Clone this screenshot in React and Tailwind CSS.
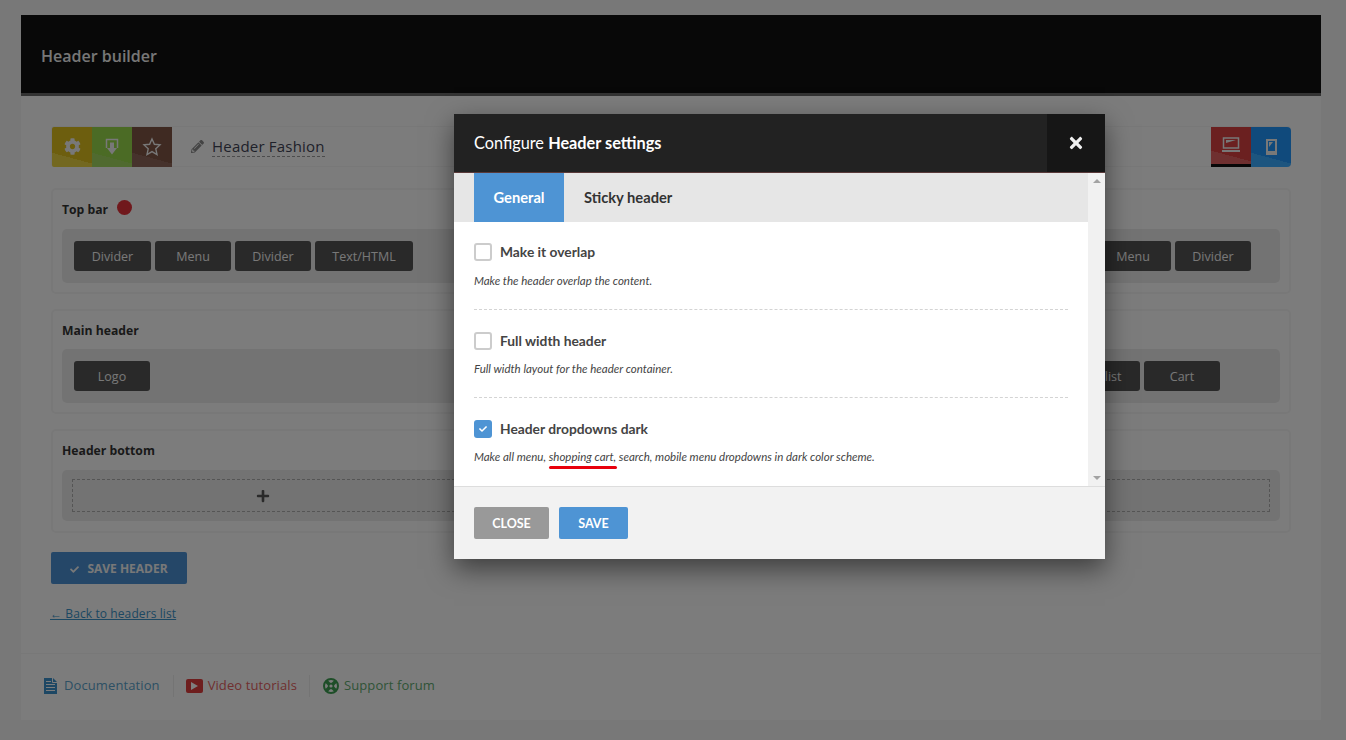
import { FaCog, FaPencilAlt, FaCheck, FaPlus, FaTimes } from "react-icons/fa";

const TopBtn = ({ className, children }) => (
    <div className={"w-10 h-10 flex items-center justify-center text-[#f0f0f0] " + className}>
        {children}
    </div>
);

const Item = ({ w, children }) => (
    <div className={"h-[30px] pt-[3px] flex items-center justify-center rounded-[3px] bg-[#525252] text-[#f0f0f0] text-[12.5px] " + w}>
        {children}
    </div>
);

const Panel = ({ title, dot, height, head, children }) => (
    <div className={"border-2 border-[#f0f0f0] rounded-[5px] px-[9px] bg-[#f9f9f9] " + height}>
        <div className={"pt-[2px] flex items-center gap-[9px] text-[12.2px] font-bold text-[#333] " + head}>
            {title}
            {dot && <span className="w-[15px] h-[15px] rounded-full bg-[#e03038] -mt-[6px]"></span>}
        </div>
        {children}
    </div>
);

const Option = ({ checked, title, desc, top, gap, last }) => (
    <div className={"h-[88px] " + top + " " + (last ? "" : "border-b border-dashed border-[#d4d4d4]")}>
        <div className="flex items-center gap-2">
            {checked ? (
                <span className="w-[18px] h-[18px] rounded-[3px] bg-[#4e94d4] flex items-center justify-center text-white">
                    <FaCheck className="text-[8px]" />
                </span>
            ) : (
                <span className="w-[18px] h-[18px] rounded-[3px] border-2 border-[#ccc] bg-white"></span>
            )}
            <span className="text-[13.800px] font-bold text-[#444] leading-[18px]">{title}</span>
        </div>
        <p className={"text-[11.500px] italic text-[#444] leading-[16px] " + gap}>{desc}</p>
    </div>
);

export default function App() {
    return (
        <div className="relative h-[740px] overflow-hidden bg-[#f0f0f0] font-['Open_Sans',sans-serif]">
            <div className="ml-[21px] pt-[15px] w-[1300px]">
                <div className="h-[81px] bg-[#101010] border-b-[3px] border-[#666]">
                    <h1 className="pl-5 pt-[30px] text-[16px] leading-[22px] font-semibold text-[#eeeeee]">Header builder</h1>
                </div>
                <div className="bg-[#f9f9f9] px-[30px] pt-[30px] h-[557px]">
                    {/* toolbar */}
                    <div className="flex justify-between items-center h-[41px] border border-[#f0f0f0] rounded-[3px]">
                        <div className="flex items-center">
                            <TopBtn className="bg-[linear-gradient(195deg,#dabc1c_72%,#e6d040_72%)] rounded-l-[2px]">
                                <FaCog className="text-[17px]" />
                            </TopBtn>
                            <TopBtn className="bg-[linear-gradient(195deg,#96d64a_72%,#a0d460_72%)]">
                                <svg width="16" height="18" viewBox="0 0 16 18" fill="none">
                                    <path d="M2.500 10V1.500h11V10" stroke="#f0f0f0" strokeWidth="1.500" />
                                    <path d="M6 4.500h4V10h3l-5 6.500L3 10h3z" fill="#f0f0f0" />
                                </svg>
                            </TopBtn>
                            <TopBtn className="bg-[linear-gradient(195deg,#7e5444_72%,#8c6458_72%)]">
                                <svg width="20" height="19" viewBox="0 0 20 19" fill="none">
                                    <path d="M10 2l2.400 5.300 5.600.600-4.200 3.900 1.200 5.700-5-2.900-5 2.900 1.200-5.700L2 7.900l5.600-.6z" stroke="#f0f0f0" strokeWidth="1.400" />
                                </svg>
                            </TopBtn>
                            <FaPencilAlt className="ml-[19px] text-[13px] text-[#888]" />
                            <span className="ml-2 text-[15px] leading-[19px] tracking-[0.2px] text-[#3f4354] border-b border-dashed border-[#999]">Header Fashion</span>
                        </div>
                        <div className="flex items-center -mr-px">
                            <TopBtn className="bg-[linear-gradient(195deg,#d64040_72%,#de6060_72%)] border-b-[3px] border-[#101010]">
                                <svg width="18" height="16" viewBox="0 0 18 16" fill="none">
                                    <rect x="1.500" y="1" width="15" height="10" stroke="#f0f0f0" strokeWidth="1.500" />
                                    <path d="M0 13h18v2H0z" fill="#f0f0f0" />
                                    <path d="M4 3h10L4 6z" fill="#f0f0f0" />
                                </svg>
                            </TopBtn>
                            <TopBtn className="bg-[linear-gradient(195deg,#2094f8_72%,#3aaaff_72%)] rounded-r-[4px]">
                                <svg width="11" height="16" viewBox="0 0 11 16" fill="none">
                                    <rect x="0" y="0" width="11" height="16" fill="#f0f0f0" />
                                    <rect x="2" y="2" width="7" height="10" fill="#2094f8" />
                                    <path d="M3 3h4L3 8z" fill="#f0f0f0" />
                                </svg>
                            </TopBtn>
                        </div>
                    </div>

                    <div className="mt-[21px]">
                        <Panel title="Top bar" dot height="h-[106px]" head="h-[39px]">
                            <div className="h-[54px] bg-[#e6e6e6] rounded-[5px] px-3 flex items-center justify-between">
                                <div className="flex gap-1">
                                    <Item w="w-[77px]">Divider</Item>
                                    <Item w="w-[76px]">Menu</Item>
                                    <Item w="w-[76px]">Divider</Item>
                                    <Item w="w-[98px]">Text/HTML</Item>
                                </div>
                                <div className="flex gap-1 mr-[17px]">
                                    <Item w="w-[76px]">Menu</Item>
                                    <Item w="w-[76px]">Divider</Item>
                                </div>
                            </div>
                        </Panel>
                    </div>
                    <div className="mt-[15px]">
                        <Panel title="Main header" height="h-[105px]" head="h-[38px]">
                            <div className="h-[54px] bg-[#e6e6e6] rounded-[5px] px-3 flex items-center justify-between">
                                <Item w="w-[76px]">Logo</Item>
                                <div className="flex gap-1 mr-[48px]">
                                    <Item w="w-[76px] pr-[6px]">Wishlist</Item>
                                    <Item w="w-[76px]">Cart</Item>
                                </div>
                            </div>
                        </Panel>
                    </div>
                    <div className="mt-[15px]">
                        <Panel title="Header bottom" height="h-[104px]" head="h-[39px]">
                            <div className="h-[51px] bg-[#e6e6e6] rounded-[5px] px-[10px] flex items-center">
                                <div className="w-full h-[33px] border border-dashed border-[#aaa] flex items-center">
                                    <div className="w-[380px] flex justify-center text-[#555]">
                                        <FaPlus className="text-[14px] -ml-px" />
                                    </div>
                                </div>
                            </div>
                        </Panel>
                    </div>

                    <button className="mt-[19px] w-[136px] h-[32px] pt-[2px] rounded-[2px] bg-[#4a8fd0] flex items-center justify-center gap-2 text-[#f0f0f0] text-[12px] font-bold">
                        <FaCheck className="text-[9px]" />
                        SAVE HEADER
                    </button>
                    <div className="mt-[16px] -ml-px">
                        <a href="#" className="text-[12px] leading-[18px] tracking-[0.1px] underline text-[#3a90c4]">← Back to headers list</a>
                    </div>
                </div>
                {/* footer */}
                <div className="h-[67px] bg-[#f9f9f9] border-t border-[#f0f0f0] pl-[23px] pb-[2px] flex items-center text-[13px] tracking-[0.1px]">
                    <div className="flex items-center gap-[7px] pr-[13px] text-[#5aa0c8]">
                        <svg width="13" height="16" viewBox="0 0 13 16" fill="none">
                            <path d="M0 0h9l4 4v12H0z" fill="#3a8fc8" />
                            <path d="M8.500 0v4.500H13" stroke="#f9f9f9" strokeWidth="1" />
                            <path d="M2 3.500h5M2 6.500h9M2 9.500h9M2 12.500h9" stroke="#f9f9f9" strokeWidth="1" />
                        </svg>
                        Documentation
                    </div>
                    <div className="w-px h-[22px] bg-[#e8e8e8]"></div>
                    <div className="flex items-center gap-[5px] px-[12px] text-[#e06060]">
                        <span className="w-[17px] h-[14px] rounded-[2px] bg-[#dd3c3c] flex items-center justify-center">
                            <span className="border-l-[7px] border-y-[4px] border-y-transparent border-l-white"></span>
                        </span>
                        Video tutorials
                    </div>
                    <div className="w-px h-[22px] bg-[#e8e8e8]"></div>
                    <div className="flex items-center gap-[5px] pl-[13px] text-[#60a870]">
                        <svg width="16" height="16" viewBox="0 0 16 16" fill="none">
                            <circle cx="8" cy="8" r="7" stroke="#3c9c50" strokeWidth="2" />
                            <path d="M3 3l10 10M13 3L3 13" stroke="#3c9c50" strokeWidth="3.500" />
                            <circle cx="8" cy="8" r="3.200" fill="#3c9c50" />
                            <circle cx="8" cy="8" r="1.600" fill="#f9f9f9" />
                        </svg>
                        Support forum
                    </div>
                </div>
            </div>

            {/* overlay + modal */}
            <div className="absolute inset-0 bg-black/50"></div>
            <div className="absolute left-[454px] top-[114px] w-[651px] h-[445px] bg-white shadow-[0_10px_25px_rgba(0,0,0,0.5)] font-['Lato',sans-serif] flex flex-col">
                <div className="h-[59px] shrink-0 flex items-center justify-between bg-[#222] border-b border-[#5a3a3a] pl-5">
                    <div className="text-[16.300px] text-white">Configure <span className="font-bold">Header settings</span></div>
                    <div className="w-[58px] h-full bg-[#161616] flex items-center justify-center text-[#f0f0f0]">
                        <FaTimes className="text-[18px]" />
                    </div>
                </div>
                <div className="flex flex-1 min-h-0">
                    <div className="flex-1">
                        <div className="h-[49px] bg-[#e6e6e6] pl-5 flex">
                            <div className="w-[90px] pb-px bg-[#4e94d4] flex items-center justify-center text-white text-[14.700px] font-bold">General</div>
                            <div className="px-5 pb-px flex items-center text-[#333] text-[14.700px] font-bold">Sticky header</div>
                        </div>
                        <div className="px-5 relative">
                            <Option title="Make it overlap" desc="Make the header overlap the content." top="pt-[21px]" gap="mt-[12px]" />
                            <Option title="Full width header" desc="Full width layout for the header container." top="pt-[22px]" gap="mt-[11px]" />
                            <Option checked last title="Header dropdowns dark" desc="Make all menu, shopping cart, search, mobile menu dropdowns in dark color scheme." top="pt-[22px]" gap="mt-[11px]" />
                            <span className="absolute left-[95px] top-[244px] w-[68px] h-[3px] rounded-full bg-[#e8000c]"></span>
                        </div>
                    </div>
                    <div className="w-[17px] bg-[#f1f1f1] flex flex-col justify-between items-center py-[6px]">
                        <span className="border-x-[4px] border-b-[4px] border-x-transparent border-b-[#a3a3a3]"></span>
                        <span className="border-x-[4px] border-t-[4px] border-x-transparent border-t-[#a3a3a3]"></span>
                    </div>
                </div>
                <div className="h-[73px] shrink-0 bg-[#f2f2f2] border-t border-[#ddd] pl-5 flex items-center gap-[10px]">
                    <button className="w-[75px] h-[32px] pt-[3px] rounded-[2px] bg-[#999] text-white text-[12.500px] font-bold">CLOSE</button>
                    <button className="w-[69px] h-[32px] pt-[3px] rounded-[2px] bg-[#4e94d4] text-white text-[12.500px] font-bold">SAVE</button>
                </div>
            </div>
        </div>
    );
}
